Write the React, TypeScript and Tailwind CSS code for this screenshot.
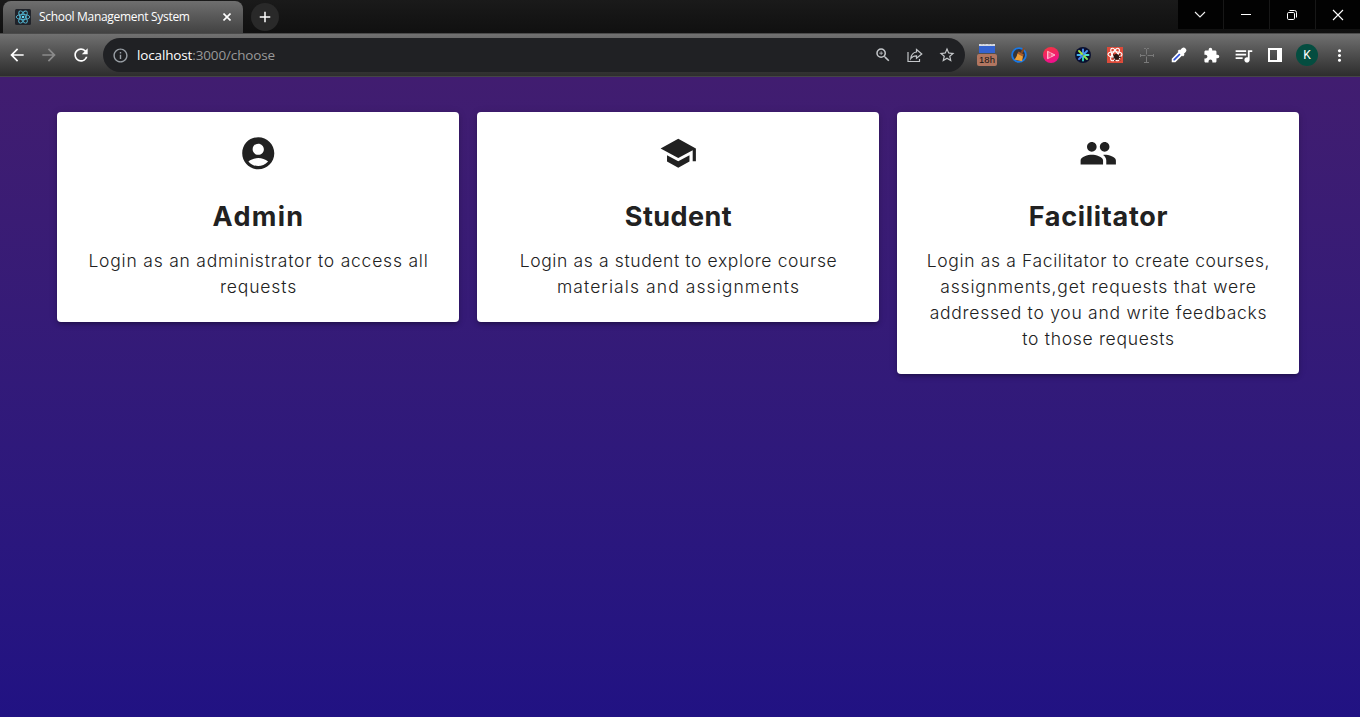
import React from "react";
import {
  MdArrowBack,
  MdArrowForward,
  MdRefresh,
  MdInfoOutline,
  MdZoomIn,
  MdStarBorder,
  MdExtension,
  MdQueueMusic,
  MdMoreVert,
  MdSchool,
  MdPeople,
  MdAdd,
} from "react-icons/md";

type Line = { text: string; tracking: string };
type Role = { icon: React.ReactNode; title: Line; lines: Line[] };

const AccountCircle = () => (
  <svg viewBox="0 0 24 24" className="size-[38.5px]" fill="currentColor">
    <path d="M12 2C6.48 2 2 6.48 2 12s4.48 10 10 10 10-4.48 10-10S17.52 2 12 2zm0 4c1.93 0 3.5 1.57 3.5 3.5S13.93 13 12 13s-3.5-1.57-3.5-3.5S10.07 6 12 6zm0 14c-2.03 0-4.43-.82-6.14-2.88C7.55 15.8 9.68 15 12 15s4.45.8 6.14 2.12C16.43 19.18 14.03 20 12 20z" />
  </svg>
);

const roles: Role[] = [
  {
    icon: <AccountCircle />,
    title: { text: "Admin", tracking: "tracking-[1.3px]" },
    lines: [
      { text: "Login as an administrator to access all", tracking: "tracking-[0.78px]" },
      { text: "requests", tracking: "tracking-[0.85px]" },
    ],
  },
  {
    icon: <MdSchool className="size-[38.5px]" />,
    title: { text: "Student", tracking: "tracking-[0.45px]" },
    lines: [
      { text: "Login as a student to explore course", tracking: "tracking-[0.62px]" },
      { text: "materials and assignments", tracking: "tracking-[1.08px]" },
    ],
  },
  {
    icon: <MdPeople className="size-[38.5px]" />,
    title: { text: "Facilitator", tracking: "tracking-[0.7px]" },
    lines: [
      { text: "Login as a Facilitator to create courses,", tracking: "tracking-[0.63px]" },
      { text: "assignments,get requests that were", tracking: "tracking-[0.81px]" },
      { text: "addressed to you and write feedbacks", tracking: "tracking-[0.74px]" },
      { text: "to those requests", tracking: "tracking-[0.7px]" },
    ],
  },
];

function ReactFavicon() {
  return (
    <svg viewBox="0 0 16 16" className="size-4 shrink-0">
      <rect width="16" height="16" rx="1.5" fill="#20232a" />
      <g fill="none" stroke="#53b6d2" strokeWidth="0.9">
        <ellipse cx="8" cy="8" rx="6.8" ry="2.6" />
        <ellipse cx="8" cy="8" rx="6.8" ry="2.6" transform="rotate(60 8 8)" />
        <ellipse cx="8" cy="8" rx="6.8" ry="2.6" transform="rotate(120 8 8)" />
      </g>
      <circle cx="8" cy="8" r="1.3" fill="#61dafb" />
    </svg>
  );
}

function TitleBar() {
  return (
    <div className="flex h-[33px] bg-linear-to-b from-[#1a1a1a] to-[#101010]">
      <div className="ml-[3px] mt-px flex h-8 w-[240px] items-center rounded-t-lg bg-linear-to-b from-[#6f6f6f] to-[#424242] pl-3">
        <ReactFavicon />
        <span className="ml-2 w-[151px] whitespace-nowrap font-['Open_Sans','Noto_Sans',sans-serif] text-[12px] tracking-[-0.31px] text-white">
          School Management System
        </span>
        <svg viewBox="0 0 8 8" className="ml-[33px] size-2 shrink-0" stroke="#fff" strokeWidth="1.6">
          <path d="M0.500 0.500 7.500 7.500M7.500 0.500 0.500 7.500" />
        </svg>
      </div>
      <div className="ml-2 mt-[3px] flex size-7 items-center justify-center rounded-full bg-[#292929]">
        <MdAdd className="size-[18px] text-white" />
      </div>
      <div className="ml-auto flex h-[29px] gap-px bg-[#171717]">
        <div className="flex w-[45px] items-center justify-center bg-[#020202] pr-px">
          <svg viewBox="0 0 12 12" className="size-3" fill="none" stroke="#f0f0f0" strokeWidth="1.1">
            <path d="M1 3 6 8 11 3" />
          </svg>
        </div>
        <div className="flex w-[45px] items-center justify-center bg-[#020202] pr-px">
          <div className="h-px w-2.5 bg-white" />
        </div>
        <div className="flex w-[45px] items-center justify-center bg-[#020202] pr-px">
          <svg viewBox="0 0 12 12" className="size-3" fill="none" stroke="#fff">
            <rect x="1.5" y="3.5" width="7" height="7" rx="1.2" />
            <path d="M3.5 1.5H8.5a2 2 0 0 1 2 2V8.5" />
          </svg>
        </div>
        <div className="flex w-11 items-center justify-center bg-[#020202]">
          <svg viewBox="0 0 12 12" className="size-3" stroke="#fff" strokeWidth="1.1">
            <path d="M1 1 11 11M11 1 1 11" />
          </svg>
        </div>
      </div>
    </div>
  );
}

function Extensions() {
  return (
    <div className="flex items-center">
      <div className="flex w-8 flex-col items-center">
        <svg viewBox="0 0 16 10" className="h-2.5 w-4">
          <rect width="16" height="9" fill="#3563d0" />
          <rect width="16" height="2" fill="#d5d9e0" />
          <path d="M3 0v1M6 0v1M10 0v1M13 0v1" stroke="#999" strokeWidth="0.7" />
        </svg>
        <span className="flex h-3 w-5 items-center justify-center rounded-[2px] bg-[#b27660] font-['Liberation_Sans',sans-serif] text-[9.5px] leading-none text-[#151515]">
          18h
        </span>
      </div>
      <div className="flex w-8 justify-center">
        <svg viewBox="0 0 16 16" className="size-4">
          <circle cx="8" cy="8" r="6.9" fill="#35343a" stroke="#1978e6" strokeWidth="1.8" />
          <path d="M12.2 0.6 13.8 1.4 11.4 6.4 9.6 5.4z" fill="#8a4a22" />
          <path d="M7.6 4.6 12.8 7.4 12 9.4 6.4 6.4z" fill="#a85c2c" />
          <path d="M6.4 6.4 12 9.4 11 14.2 3.2 12.6c1.700-1.600 2.700-3.400 3.200-6.200z" fill="#ef9f38" />
        </svg>
      </div>
      <div className="flex w-8 justify-center">
        <svg viewBox="0 0 16 16" className="size-4">
          <defs>
            <linearGradient id="play" x1="0" y1="0" x2="0.3" y2="1">
              <stop offset="0" stopColor="#f5383b" />
              <stop offset="1" stopColor="#f0108a" />
            </linearGradient>
          </defs>
          <circle cx="8" cy="8" r="8" fill="url(#play)" />
          <path d="M4.500 4.300v7.400l7.500-3.700z" fill="#ffb3c4" fillOpacity="0.55" stroke="#ffd5de" strokeWidth="0.8" />
          <path d="M7 5.500v5" stroke="#f3285f" strokeWidth="0.9" />
        </svg>
      </div>
      <div className="flex w-8 justify-center">
        <svg viewBox="0 0 16 16" className="size-4">
          <circle cx="8" cy="8" r="8" fill="#0a1030" />
          <g strokeWidth="1.9" strokeLinecap="round">
            <path d="M8 2.500V6.500" stroke="#4d90f0" />
            <path d="M8 9.500v4" stroke="#35d8c2" />
            <path d="M2.500 8H6.500" stroke="#42b5f0" />
            <path d="M9.500 8h4" stroke="#4fe0d0" />
            <path d="M4 4 7 7" stroke="#a7e83e" />
            <path d="M12 4 9 7" stroke="#4896f5" />
            <path d="M4 12 7 9" stroke="#4a82f0" />
            <path d="M12 12 9 9" stroke="#90e052" />
          </g>
        </svg>
      </div>
      <div className="flex w-8 justify-center">
        <svg viewBox="0 0 16 16" className="size-4">
          <rect width="16" height="16" fill="#dd4b3a" />
          <g fill="none" stroke="#fff" strokeWidth="1.1">
            <ellipse cx="8" cy="7.500" rx="7" ry="2.700" />
            <ellipse cx="8" cy="7.500" rx="7" ry="2.700" transform="rotate(60 8 7.500)" />
            <ellipse cx="8" cy="7.500" rx="7" ry="2.700" transform="rotate(120 8 7.500)" />
          </g>
          <ellipse cx="9.500" cy="9.800" rx="2.600" ry="3" fill="#271512" transform="rotate(-30 9.500 9.800)" />
          <path d="M6 7.500 8 9M5.800 11h2M7.500 14l1-2M12.500 7l-1 2M14 10l-2 .5M13 13.500l-1.500-1.500" stroke="#271512" strokeWidth="1" />
        </svg>
      </div>
      <div className="flex w-8 justify-center">
        <svg viewBox="0 0 16 16" className="size-4" stroke="#7a7a7a" strokeWidth="1">
          <path d="M1 8.500H6.500M8.500 8.500H15M7.500 2V7.500M7.500 9.500V15M5 1.500h2M8 1.500h2M5 15.500h5M1.500 7v3M14.500 7v3" />
        </svg>
      </div>
      <div className="flex w-8 justify-center">
        <svg viewBox="0 0 16 16" className="size-4">
          <path d="M10.900 1.300a2.700 2.700 0 0 1 3.800 3.800L12.800 7l.8.8-1.600 1.600L6.600 4 8.200 2.400l.8.8z" fill="#fff" />
          <path d="M8.300 5.300 10.700 7.700 4 14.400H1.600V12z" fill="#2b50dc" stroke="#fff" strokeWidth="1.700" />
        </svg>
      </div>
      <div className="flex w-8 justify-center">
        <MdExtension className="size-[17px] text-white" />
      </div>
      <div className="flex w-8 justify-center">
        <MdQueueMusic className="size-[21px] text-white" />
      </div>
      <div className="flex w-8 justify-center">
        <div className="h-3.5 w-3.5 border-2 border-r-[5px] border-white" />
      </div>
      <div className="flex w-8 justify-center">
        <span className="flex size-[22px] items-center justify-center rounded-full bg-[#044d40] font-[Roboto,sans-serif] text-[12px] text-white">
          K
        </span>
      </div>
      <div className="flex w-8 justify-center">
        <MdMoreVert className="size-[19px] text-white" />
      </div>
    </div>
  );
}

function Toolbar() {
  return (
    <div className="flex h-11 items-center border-t border-b border-t-[#4b4b4b] border-b-[#454545] bg-linear-to-b from-[#717171] to-[#2d2d2d]">
      <MdArrowBack className="ml-[7px] size-5 text-white" />
      <MdArrowForward className="ml-3 size-5 text-[#8b8b8b]" />
      <MdRefresh className="ml-3 size-5 text-white" />
      <div className="ml-[12px] flex h-[34px] w-[862px] items-center rounded-full bg-[#202124] pl-[9px] pr-[9px]">
        <MdInfoOutline className="size-[17px] text-[#9aa0a6]" />
        <span className="ml-2 whitespace-nowrap font-['Open_Sans','Noto_Sans',sans-serif] text-[13.5px] tracking-[-0.14px] text-[#999]">
          <span className="text-white">localhost</span>:3000/choose
        </span>
        <div className="ml-auto flex items-center gap-[15px] text-[#c4c7ca]">
          <MdZoomIn className="size-[18px]" />
          <svg viewBox="0 0 16 16" className="size-4" fill="none" stroke="currentColor" strokeWidth="1.200">
            <path d="M1 5V14.500H12.500V12M9.500 2.500 14.800 7 9.500 11.300V8.800C7 8.800 5.200 9.600 3.800 11.500 4.200 7.800 6 5.500 9.500 5z" />
          </svg>
          <MdStarBorder className="size-[18px]" />
        </div>
      </div>
      <div className="ml-[6px]">
        <Extensions />
      </div>
    </div>
  );
}

function RoleCard({ icon, title, lines }: Role) {
  return (
    <div className="flex w-[402px] flex-col items-center rounded bg-white pt-[22px] pb-[22px] text-[#212121] shadow-[0_3px_3px_-2px_rgba(0,0,0,0.2),0_3px_4px_0_rgba(0,0,0,0.14),0_1px_8px_0_rgba(0,0,0,0.12)]">
      {icon}
      <h2 className={`mt-6 h-10 pl-px text-[27px] leading-10 font-bold ${title.tracking}`}>{title.text}</h2>
      <p className="mt-[11.5px] flex flex-col items-center pl-px text-[17.5px] leading-[26px] font-light">
        {lines.map((line) => (
          <span key={line.text} className={`whitespace-nowrap ${line.tracking}`}>
            {line.text}
          </span>
        ))}
      </p>
    </div>
  );
}

export default function App() {
  return (
    <div className="flex h-[717px] w-[1360px] flex-col overflow-hidden">
      <TitleBar />
      <Toolbar />
      <main className="flex flex-1 items-start gap-[18px] bg-linear-to-b from-[#411d70] to-[#211283] pt-[35px] pl-[57px] font-[Inter,sans-serif]">
        {roles.map((role) => (
          <RoleCard key={role.title.text} {...role} />
        ))}
      </main>
    </div>
  );
}
